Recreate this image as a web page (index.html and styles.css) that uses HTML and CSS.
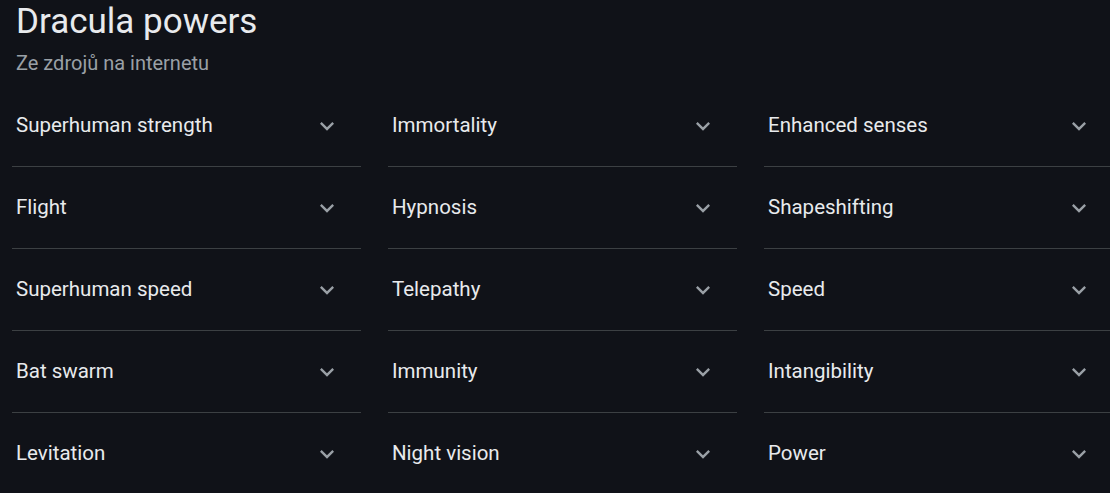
FILE: index.html
```html
<!DOCTYPE html>
<html lang="cs">
<head>
<meta charset="utf-8">
<title>Dracula powers</title>
<link rel="stylesheet" href="styles.css">
</head>
<body>
<div class="header">
  <h1 class="title">Dracula powers</h1>
  <div class="subtitle">Ze zdrojů na internetu</div>
</div>
<div class="grid">
  <div class="item"><span>Superhuman strength</span><svg viewBox="0 0 24 24"><path d="M16.59 8.59L12 13.17 7.41 8.59 6 10l6 6 6-6z"/></svg></div>
  <div class="item"><span>Immortality</span><svg viewBox="0 0 24 24"><path d="M16.59 8.59L12 13.17 7.41 8.59 6 10l6 6 6-6z"/></svg></div>
  <div class="item"><span>Enhanced senses</span><svg viewBox="0 0 24 24"><path d="M16.59 8.59L12 13.17 7.41 8.59 6 10l6 6 6-6z"/></svg></div>
  <div class="item"><span>Flight</span><svg viewBox="0 0 24 24"><path d="M16.59 8.59L12 13.17 7.41 8.59 6 10l6 6 6-6z"/></svg></div>
  <div class="item"><span>Hypnosis</span><svg viewBox="0 0 24 24"><path d="M16.59 8.59L12 13.17 7.41 8.59 6 10l6 6 6-6z"/></svg></div>
  <div class="item"><span>Shapeshifting</span><svg viewBox="0 0 24 24"><path d="M16.59 8.59L12 13.17 7.41 8.59 6 10l6 6 6-6z"/></svg></div>
  <div class="item"><span>Superhuman speed</span><svg viewBox="0 0 24 24"><path d="M16.59 8.59L12 13.17 7.41 8.59 6 10l6 6 6-6z"/></svg></div>
  <div class="item"><span>Telepathy</span><svg viewBox="0 0 24 24"><path d="M16.59 8.59L12 13.17 7.41 8.59 6 10l6 6 6-6z"/></svg></div>
  <div class="item"><span>Speed</span><svg viewBox="0 0 24 24"><path d="M16.59 8.59L12 13.17 7.41 8.59 6 10l6 6 6-6z"/></svg></div>
  <div class="item"><span>Bat swarm</span><svg viewBox="0 0 24 24"><path d="M16.59 8.59L12 13.17 7.41 8.59 6 10l6 6 6-6z"/></svg></div>
  <div class="item"><span>Immunity</span><svg viewBox="0 0 24 24"><path d="M16.59 8.59L12 13.17 7.41 8.59 6 10l6 6 6-6z"/></svg></div>
  <div class="item"><span>Intangibility</span><svg viewBox="0 0 24 24"><path d="M16.59 8.59L12 13.17 7.41 8.59 6 10l6 6 6-6z"/></svg></div>
  <div class="item"><span>Levitation</span><svg viewBox="0 0 24 24"><path d="M16.59 8.59L12 13.17 7.41 8.59 6 10l6 6 6-6z"/></svg></div>
  <div class="item"><span>Night vision</span><svg viewBox="0 0 24 24"><path d="M16.59 8.59L12 13.17 7.41 8.59 6 10l6 6 6-6z"/></svg></div>
  <div class="item"><span>Power</span><svg viewBox="0 0 24 24"><path d="M16.59 8.59L12 13.17 7.41 8.59 6 10l6 6 6-6z"/></svg></div>
</div>
</body>
</html>
```

FILE: styles.css
```css
html, body {
  margin: 0;
  padding: 0;
  background: #101218;
  overflow: hidden;
}
body {
  font-family: Roboto, "Liberation Sans", Arial, sans-serif;
  color: #e8eaed;
}
.header {
  padding: 0 16px;
}
.title {
  margin: 0;
  font-size: 35px;
  font-weight: 400;
  line-height: 44px;
  color: #e8eaed;
}
.subtitle {
  margin-top: 7px;
  font-size: 20px;
  line-height: 24px;
  color: #9aa0a6;
}
.grid {
  display: grid;
  grid-template-columns: repeat(3, 349px);
  column-gap: 27px;
  width: 1101px;
  margin: 10px 0 0 12px;
}
.item {
  width: 325px;
  height: 81px;
  border-bottom: 1px solid #3c4043;
  display: flex;
  align-items: center;
  justify-content: space-between;
  padding: 0 20px 0 4px;
  box-sizing: content-box;
  font-size: 20.5px;
  color: #e8eaed;
}
.item span {
  margin-bottom: 1px;
}
.item svg {
  width: 28px;
  height: 28px;
  fill: #9aa0a6;
  flex: none;
}
```
